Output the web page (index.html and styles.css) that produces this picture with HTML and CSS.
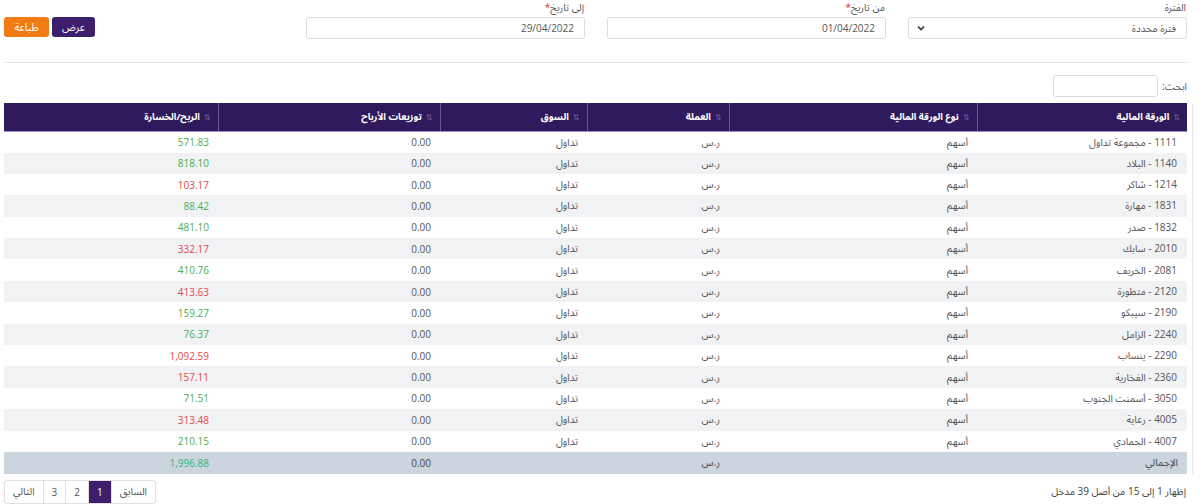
FILE: index.html
```html
<!DOCTYPE html>
<html lang="ar" dir="rtl">
<head>
<meta charset="utf-8">
<title>الأرباح والخسائر</title>
<link rel="stylesheet" href="styles.css">
</head>
<body>
<div class="page">
  <div class="filters">
    <div class="field">
      <label class="label">الفترة</label>
      <div class="select">
        <span>فترة محددة</span>
        <svg class="chev" width="8" height="6" viewBox="0 0 8 6"><path d="M1 1.5 L4 4.5 L7 1.5" fill="none" stroke="#333" stroke-width="1.6"/></svg>
      </div>
    </div>
    <div class="field">
      <label class="label">من تاريخ<span class="req">*</span></label>
      <div class="input">01/04/2022</div>
    </div>
    <div class="field">
      <label class="label">إلى تاريخ<span class="req">*</span></label>
      <div class="input">29/04/2022</div>
    </div>
    <div class="actions">
      <button class="btn btn-primary">عرض</button>
      <button class="btn btn-orange">طباعة</button>
    </div>
  </div>
  <div class="divider"></div>
  <div class="search-row">
    <label class="search-label">ابحث:</label>
    <div class="search-input"></div>
  </div>
  <div class="table-wrap">
    <table class="grid">
      <colgroup>
        <col style="width:210px"><col style="width:248px"><col style="width:142px"><col style="width:147px"><col style="width:222px"><col style="width:214px">
      </colgroup>
      <thead>
        <tr>
          <th><span class="sort">⇅</span>الورقة المالية</th>
          <th><span class="sort">⇅</span>نوع الورقة المالية</th>
          <th><span class="sort">⇅</span>العملة</th>
          <th><span class="sort">⇅</span>السوق</th>
          <th><span class="sort">⇅</span>توزيعات الأرباح</th>
          <th><span class="sort">⇅</span>الربح/الخسارة</th>
        </tr>
      </thead>
      <tbody>
        <tr><td>1111 - مجموعة تداول</td><td>أسهم</td><td>ر.س</td><td>تداول</td><td>0.00</td><td class="pos">571.83</td></tr>
        <tr><td>1140 - البلاد</td><td>أسهم</td><td>ر.س</td><td>تداول</td><td>0.00</td><td class="pos">818.10</td></tr>
        <tr><td>1214 - شاكر</td><td>أسهم</td><td>ر.س</td><td>تداول</td><td>0.00</td><td class="neg">103.17</td></tr>
        <tr><td>1831 - مهارة</td><td>أسهم</td><td>ر.س</td><td>تداول</td><td>0.00</td><td class="pos">88.42</td></tr>
        <tr><td>1832 - صدر</td><td>أسهم</td><td>ر.س</td><td>تداول</td><td>0.00</td><td class="pos">481.10</td></tr>
        <tr><td>2010 - سابك</td><td>أسهم</td><td>ر.س</td><td>تداول</td><td>0.00</td><td class="neg">332.17</td></tr>
        <tr><td>2081 - الخريف</td><td>أسهم</td><td>ر.س</td><td>تداول</td><td>0.00</td><td class="pos">410.76</td></tr>
        <tr><td>2120 - متطورة</td><td>أسهم</td><td>ر.س</td><td>تداول</td><td>0.00</td><td class="neg">413.63</td></tr>
        <tr><td>2190 - سيبكو</td><td>أسهم</td><td>ر.س</td><td>تداول</td><td>0.00</td><td class="pos">159.27</td></tr>
        <tr><td>2240 - الزامل</td><td>أسهم</td><td>ر.س</td><td>تداول</td><td>0.00</td><td class="pos">76.37</td></tr>
        <tr><td>2290 - ينساب</td><td>أسهم</td><td>ر.س</td><td>تداول</td><td>0.00</td><td class="neg">1,092.59</td></tr>
        <tr><td>2360 - الفخارية</td><td>أسهم</td><td>ر.س</td><td>تداول</td><td>0.00</td><td class="neg">157.11</td></tr>
        <tr><td>3050 - أسمنت الجنوب</td><td>أسهم</td><td>ر.س</td><td>تداول</td><td>0.00</td><td class="pos">71.51</td></tr>
        <tr><td>4005 - رعاية</td><td>أسهم</td><td>ر.س</td><td>تداول</td><td>0.00</td><td class="neg">313.48</td></tr>
        <tr><td>4007 - الحمادي</td><td>أسهم</td><td>ر.س</td><td>تداول</td><td>0.00</td><td class="pos">210.15</td></tr>
      </tbody>
      <tfoot>
        <tr><td>الإجمالي</td><td></td><td>ر.س</td><td></td><td>0.00</td><td class="total">1,996.88</td></tr>
      </tfoot>
    </table>
  </div>
  <div class="footer">
    <div class="info">إظهار 1 إلى 15 من أصل 39 مدخل</div>
    <div class="pager">
      <span class="pg">السابق</span>
      <span class="pg active">1</span>
      <span class="pg">2</span>
      <span class="pg">3</span>
      <span class="pg">التالي</span>
    </div>
  </div>
</div>
</body>
</html>
```

FILE: styles.css
```css
* { box-sizing: border-box; }
html, body { margin: 0; padding: 0; background: #fff; }
body {
  font-family: "Open Sans", "Noto Sans Arabic", "DejaVu Sans", sans-serif;
  font-size: 10px;
  color: #555;
}
.page {
  padding: 0 13px 0 4px;
}
.filters {
  display: grid;
  grid-template-columns: 279px 279px 279px 1fr;
  column-gap: 22px;
  padding-top: 1px;
}
.field { display: flex; flex-direction: column; }
.label {
  font-size: 10px;
  color: #555;
  height: 16px;
  line-height: 12px;
  padding-right: 1px;
}
.req { color: #e3342f; }
.select, .input {
  height: 22px;
  border: 1px solid #dcdcdc;
  border-radius: 3px;
  background: #fff;
  font-size: 10px;
  color: #555;
  display: flex;
  align-items: center;
  justify-content: space-between;
  padding: 0 10px 0 8px;
}
.chev { display: block; }
.actions {
  display: flex;
  justify-content: flex-end;
  gap: 3px;
  padding-top: 16px;
}
.btn {
  height: 20px;
  border: 0;
  border-radius: 3px;
  color: #fff;
  font-family: inherit;
  font-size: 10.5px;
  padding: 0;
  cursor: pointer;
}
.btn-primary { background: #3d1e6d; width: 43px; }
.btn-orange { background: #f07c13; width: 45px; }
.divider {
  height: 1px;
  background: #e4e4e4;
  margin-top: 23px;
}
.search-row {
  display: flex;
  align-items: center;
  margin-top: 12px;
  height: 22px;
}
.search-label { font-size: 10px; color: #555; margin-left: 4px; padding-right: 0; }
.search-input {
  width: 105px;
  height: 22px;
  border: 1px solid #dcdcdc;
  border-radius: 3px;
}
.table-wrap {
  margin-top: 6px;
  margin-right: -6px;
  padding-right: 5px;
  border-right: 1px solid #e6e6e6;
}
.grid {
  width: 1183px;
  border-collapse: collapse;
  table-layout: fixed;
}
.grid th {
  background: #2e1a5c;
  color: #fff;
  font-weight: bold;
  font-size: 9.5px;
  text-align: right;
  height: 28px;
  padding: 0 7px;
  border-left: 1px solid #6c5a93;
  border-bottom: 1px solid #9f8cc6;
}
.grid th:last-child { border-left: 0; }
.sort {
  color: #6f5f96;
  font-size: 8px;
  font-weight: normal;
  margin-left: 4px;
}
.grid td {
  height: 21.4px;
  padding: 0 9px;
  text-align: right;
  font-size: 10px;
  color: #555;
  white-space: nowrap;
}
.grid tbody tr:nth-child(even) td { background: #f1f2f4; }
.grid tbody tr td:first-child { padding-right: 10px; }
.grid td.pos { color: #4cae4f; }
.grid td.neg { color: #e2474b; }
.grid tfoot td { background: #ccd5de; color: #444; height: 22px; }
.grid tfoot td.total { color: #2eb57a; }
.footer {
  display: flex;
  justify-content: space-between;
  align-items: center;
  margin-top: 6px;
}
.info { font-size: 10px; color: #444; padding-right: 1px; }
.pager {
  display: flex;
  border: 1px solid #e0e0e0;
  border-radius: 3px;
  height: 24px;
}
.pg {
  display: flex;
  align-items: center;
  justify-content: center;
  padding: 0 8px;
  min-width: 22px;
  font-size: 10px;
  color: #555;
  border-left: 1px solid #e0e0e0;
}
.pg:last-child { border-left: 0; }
.pg.active { background: #3d1e6d; color: #fff; }
```
